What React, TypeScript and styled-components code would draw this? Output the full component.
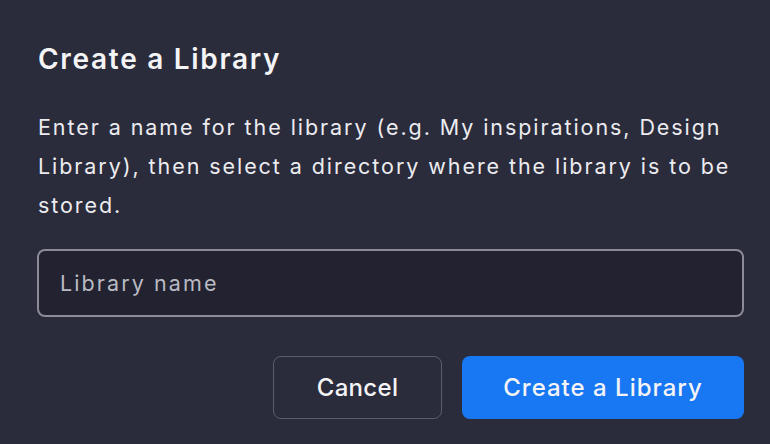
import { FC, useState } from 'react';
import styled, { createGlobalStyle } from 'styled-components';

const GlobalStyle = createGlobalStyle`
  html, body {
    margin: 0;
    padding: 0;
    background: #2a2b3b;
    font-family: Inter, 'Noto Sans', sans-serif;
    -webkit-font-smoothing: antialiased;
  }
`;

const Dialog = styled.div`
  box-sizing: border-box;
  width: 770px;
  height: 444px;
  padding: 40px 26px 0 37px;
  background: #2a2b3b;
  color: #f4f4f6;
  display: flex;
  flex-direction: column;
`;

const Title = styled.h2`
  margin: 0 0 0 1px;
  font-size: 28px;
  line-height: 38px;
  font-weight: 600;
  letter-spacing: 1.7px;
`;

const Description = styled.p`
  margin: 30px 0 0 1px;
  width: 720px;
  font-size: 21.5px;
  line-height: 39px;
  font-weight: 400;
  letter-spacing: 1.93px;
  color: #ececf0;
`;

const NameInput = styled.input`
  box-sizing: border-box;
  margin-top: 24px;
  width: 707px;
  height: 68px;
  padding: 0 21px;
  border: 2px solid #8b8c97;
  border-radius: 8px;
  background: #222230;
  color: #f4f4f6;
  font-family: inherit;
  font-size: 21.5px;
  letter-spacing: 2.1px;
  outline: none;

  &::placeholder {
    color: #b9bac2;
  }
`;

const Actions = styled.div`
  display: flex;
  justify-content: flex-end;
  gap: 20px;
  margin-top: 39px;
  width: 707px;
`;

const Button = styled.button<{ $primary?: boolean }>`
  box-sizing: border-box;
  height: 63px;
  padding: 0 20px;
  border-radius: 8px;
  font-family: inherit;
  font-size: 24px;
  font-weight: 500;
  letter-spacing: ${({ $primary }) => ($primary ? '1px' : '0.3px')};
  color: #f4f4f6;
  cursor: pointer;
  border: ${({ $primary }) => ($primary ? 'none' : '1.5px solid #5c5d6a')};
  background: ${({ $primary }) => ($primary ? '#1877f2' : 'transparent')};
  min-width: ${({ $primary }) => ($primary ? '282px' : '169px')};
`;

const App: FC = () => {
  const [name, setName] = useState('');

  return (
    <>
      <GlobalStyle />
      <Dialog>
        <Title>Create a Library</Title>
        <Description>
          Enter a name for the library (e.g. My inspirations, Design Library), then select a directory where the
          library is to be stored.
        </Description>
        <NameInput value={name} onChange={({ target: { value } }) => setName(value)} placeholder={'Library name'} />
        <Actions>
          <Button>Cancel</Button>
          <Button $primary>Create a Library</Button>
        </Actions>
      </Dialog>
    </>
  );
};

export default App;
